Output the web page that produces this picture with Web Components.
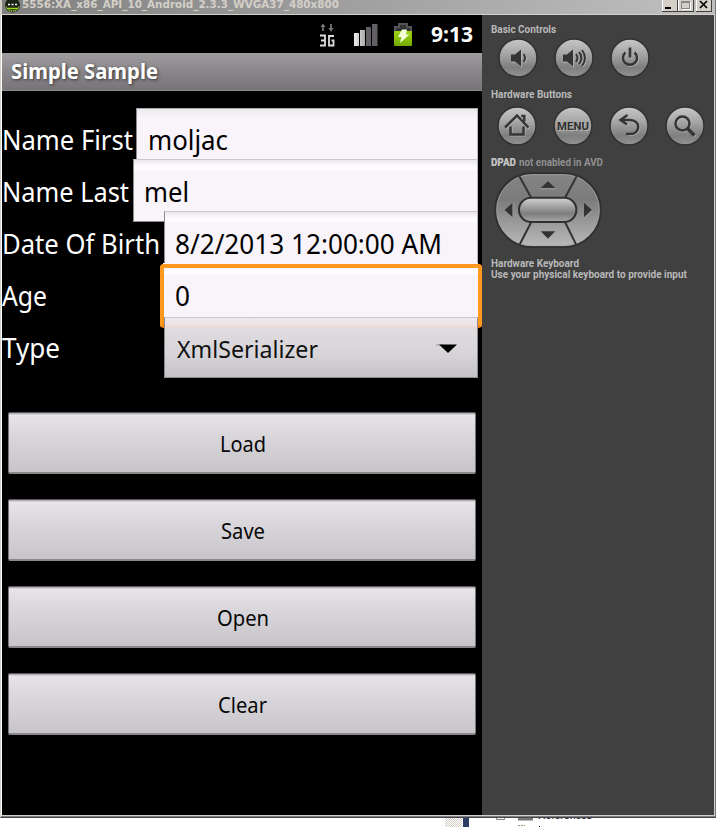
<!DOCTYPE html>
<html lang="en"><head><meta charset="utf-8"><title>Android Emulator</title>
<style>html,body{margin:0;width:716px;height:827px;overflow:hidden;background:#fff}</style></head>
<body><emulator-window></emulator-window>
<script>
const define=(name,html,setup)=>{
  const t=document.createElement('template');t.innerHTML=html;
  customElements.define(name,class extends HTMLElement{
    constructor(){super();this.attachShadow({mode:'open'}).append(t.content.cloneNode(true));}
    connectedCallback(){if(setup)setup(this,this.shadowRoot);}
  });
};
// Text condensed or widened to an exact advance width.
define('fit-text',`<style>:host{display:block;white-space:nowrap;flex:none}span{display:inline-block;transform-origin:0 50%}</style><span><slot></slot></span>`,
 (el,r)=>{const s=r.querySelector('span'),w=+el.getAttribute('w');el.style.width=w+'px';
  s.style.transform='scaleX('+w/s.getBoundingClientRect().width+')';});

define('window-caption',`<style>
:host{display:flex;background:linear-gradient(90deg,#808080,#c0c0c0);border-bottom:1px solid #d4d0c8;box-sizing:border-box;height:15px;overflow:hidden;padding-left:3px;margin-left:1px;
 font:bold 11px/12px "DejaVu Sans",sans-serif;color:#d4d0c8}
svg{flex:none}.t{margin:-1px 0 0 1px}
</style><svg width="16" height="14" viewBox="0 0 16 14"><circle cx="7.500" cy="5" r="7.500" fill="#1c2415"/><path d="M.8 6a7 7 0 0 0 13.400 0" fill="none" stroke="#7d9a45"/><path d="M2 8.500h11" stroke="#9cdc22" stroke-width="1.500"/><path d="M4 11h8" stroke="#b5e04a" stroke-dasharray="1 1"/><path d="M3 4.500h2M6.500 4.500h2M10 4.500h2" stroke="#fff" stroke-width="1.500"/></svg>
<fit-text class="t" w="317">5556:XA_x86_API_10_Android_2.3.3_WVGA37_480x800</fit-text><span style="flex:1"></span>
<svg width="54" height="14" viewBox="0 0 54 14" shape-rendering="crispEdges"><g fill="#d4d0c8"><path d="M1 0h15v12H1zM17 0h15v12H17zM35 0h15v12H35z"/></g><path d="M1 11.500h15V0M17 11.500h15V0M35 11.500h15V0" fill="none" stroke="#404040"/><path d="M1.500 0v11M17.500 0v11M35.500 0v11" stroke="#fff"/><path d="M4 8h6" stroke="#000" stroke-width="2"/><path d="M20.500 2.500h8v6h-8z" fill="none" stroke="#888"/><path d="M20 1.500h9" stroke="#888"/><path d="M29.500 2v7.500H21" stroke="#fff" fill="none"/><path d="M39 1l7 7M46 1l-7 7" stroke="#000" stroke-width="1.700" shape-rendering="auto"/></svg>`);

define('status-bar',`<style>:host{display:flex;height:38px;box-sizing:border-box;background:#000;color:#fff;padding-right:9px;justify-content:flex-end;font:bold 21px/38px "Noto Sans",sans-serif}svg{flex:none;margin-right:13px}</style>
<svg width="102" height="38" viewBox="0 0 102 38"><defs><linearGradient id="g" x2="0" y2="1"><stop offset="0" stop-color="#9ed415"/><stop offset="1" stop-color="#75a900"/></linearGradient><linearGradient id="s"><stop stop-color="#eee"/><stop offset="1" stop-color="#aaa"/></linearGradient></defs>
<path d="M7 16v-5M15 9v5" stroke="#777" stroke-width="1.700"/><path d="M4.500 12L7 8.500 9.500 12zM12.500 13L15 17l2.500-4z" fill="#777"/>
<path d="M4 20.500h5v10H4M5 25.500h4M18 21h-5v9.500h4.500v-5h-2" stroke="#ddd" stroke-width="1.800" fill="none"/>
<path d="M38 18h5v13h-5zM44 15h5v16h-5z" fill="url(#s)"/><path d="M50 12h5v19h-5zM56 9h5.500v22H56z" fill="#626065"/>
<path d="M79 17v-5h4V9h8v3h4v5" fill="#333" stroke="#555" stroke-width="2"/><rect x="78" y="16" width="18" height="15" rx="1" fill="url(#g)"/><path d="M86 14.500h5l-1 5h3.500L84 28l1.500-6H82z" fill="#f2ffd8"/></svg><fit-text w="42">9:13</fit-text>`);

define('app-title',`<style>:host{display:flex;height:38px;box-sizing:border-box;padding-left:9px;background:linear-gradient(#a09da1,#858286 60%,#777578);border-bottom:1px solid #8b898c;color:#fff;font:bold 21px/37px "Noto Sans",sans-serif;text-shadow:1px 1px 3px #333}</style><fit-text w="147"><slot></slot></fit-text>`);

define('form-row',`<style>:host{display:flex;height:52px;color:#fff;font:28px/62px "Noto Sans",sans-serif}
.label{flex:none;overflow:visible}</style><div class="label"></div><slot></slot>`,
 (el,r)=>{const l=r.querySelector('.label');l.style.width=el.getAttribute('col')+'px';
 const f=document.createElement('fit-text');f.setAttribute('w',el.getAttribute('w'));f.innerHTML='<slot name="label"></slot>';l.replaceChildren(f);});

define('text-field',`<style>:host{display:flex;flex:1;box-sizing:border-box;height:62px;margin-right:4px;padding-left:11px;color:#000;border:1px solid #8c8a8e;border-top-color:#aaa8ac;border-right-color:#b8b5ba;
 background:linear-gradient(#ebe8ec,#f8f4fa 9px,#f8f4fa);line-height:61px;position:relative;font-size:28px}
:host([over]){margin-top:-1px;height:63px;line-height:63px;border-top-color:#cbc8cd;background:linear-gradient(#e9e6ea 0,#f8f5f9 4px,#fffcff 7px,#fffcff 10px,#f8f4fa 11px)}
:host([focus])::before{content:"";position:absolute;inset:0 -5px -3px -4px;border:4px solid #ff981f;border-bottom-color:#f5810c;border-radius:4px}
:host([focus]){border-color:transparent}</style><slot></slot>`);

define('drop-down',`<style>:host{display:flex;flex:1;height:61px;box-sizing:border-box;margin:1px 4px 0 0;padding:2px 18px 0 12px;justify-content:space-between;align-items:center;position:relative;color:#111;
 border:1px solid #8e8b90;border-top-color:#c9c6cb;font-size:24px;line-height:60px;background:linear-gradient(#efe9f0,#eee4e6 6px,#ead9d4 9px,#dedcdf 11px,#d7d5d9 35px,#c6c3c8)}</style><slot></slot>
<svg width="24" height="12" viewBox="0 0 24 12"><path d="M1 2h8" stroke="#999"/><path d="M4 1.500h18L13 10z" fill="#000"/></svg>`);

define('push-button',`<style>:host{display:flex;justify-content:center;height:62px;box-sizing:border-box;border:1px solid #77757a;border-top-color:#5d5b60;border-bottom:2px solid #89878b;border-radius:2px;color:#080808;font:22px/60px "Noto Sans",sans-serif;padding-left:1px;
background:linear-gradient(#9d9a9f 0,#e8e4e9 2px,#dad8dc 35%,#c8c5ca)}</style><slot></slot>`);

define('phone-screen',`<style>:host{display:block;width:480px;height:800px;background:#000}.form{padding-top:17px}.buttons{display:grid;gap:25px;padding:44px 6px 0}</style>
<status-bar></status-bar><app-title>Simple Sample</app-title><div class="form">
<form-row col="134" w="131"><span slot="label">Name First</span><text-field><fit-text w="80">moljac</fit-text></text-field></form-row>
<form-row col="131" w="127"><span slot="label">Name Last</span><text-field over style="padding-left:10px"><fit-text w="45">mel</fit-text></text-field></form-row>
<form-row col="162" w="158"><span slot="label">Date Of Birth</span><text-field over style="padding-left:10px"><fit-text w="267">8/2/2013 12:00:00 AM</fit-text></text-field></form-row>
<form-row col="161" w="45"><span slot="label">Age</span><text-field over focus><fit-text w="15">0</fit-text></text-field></form-row>
<form-row col="162" w="58"><span slot="label">Type</span><drop-down><fit-text w="141">XmlSerializer</fit-text></drop-down></form-row></div>
<div class="buttons"><push-button><fit-text w="46">Load</fit-text></push-button><push-button><fit-text w="44">Save</fit-text></push-button><push-button><fit-text w="52">Open</fit-text></push-button><push-button><fit-text w="49">Clear</fit-text></push-button></div>`);

const icons={
 down:'<path d="M14 17.500h4l6-5v17l-6-5h-4z" fill="#353535"/><path d="M26.500 17q3 4 0 8" stroke-width="2"/>',
 up:'<path d="M10 17.500h4l6-5v17l-6-5h-4z" fill="#353535"/><path d="M23 17q3 4 0 8M26 15q5 6 0 12M29 13q6 8 0 16" stroke-width="2"/>',
 power:'<path d="M16.500 15.500a7 7 0 1 0 9 0" stroke-width="2.500"/><path d="M21 10.500v10" stroke-width="2.700"/>',
 home:'<path d="M9 22.500L21 10.500l11.500 12M26.500 12v-1h1.800v5.500M14.500 21.500v8h13v-8" stroke-width="2.500"/>',
 menu:'',
 back:'<path d="M19.500 10l-7 5 6.500 4.500M14 15h8c11 0 11 14 0 14h-4" stroke-width="2.500"/>',
 search:'<circle cx="18.500" cy="18.500" r="7" stroke-width="2.500"/><path d="M23.500 23.500l7 7" stroke-width="3.500"/>'
};
define('control-button',`<style>:host{display:grid;width:42px;height:42px;font:bold 10.5px/42px Roboto,sans-serif;color:#303030}svg,div{grid-area:1/1}div{display:flex;justify-content:center;padding-top:1px;text-shadow:1px 1px 0 #bbb}</style><svg width="42" height="42" viewBox="0 0 42 42"></svg><div><slot></slot></div>`,
 (el,r)=>{r.querySelector('svg').innerHTML='<defs><linearGradient id="c" x2="0" y2="1"><stop stop-color="#c5c6c7"/><stop offset=".35" stop-color="#aaa"/><stop offset=".75" stop-color="#7f7f7f"/><stop offset="1" stop-color="#929292"/></linearGradient></defs><circle cx="21" cy="21" r="19" fill="url(#c)" stroke="#303030" stroke-width="1.500"/><g fill="none" stroke="#c4c4c4" opacity=".65" transform="translate(.8 .8)">'+icons[el.getAttribute('icon')].replace(/fill="[^"]*"/g,'')+'</g><g fill="none" stroke="#353535">'+icons[el.getAttribute('icon')].replace('fill="#353535"','fill="#353535" stroke="none"')+'</g>';});

define('direction-pad',`<style>:host{display:block;height:80px;width:115px}svg{display:block}</style><svg width="115" height="80" viewBox="21 60 345 240"><defs><linearGradient id="p" x2="0" y2="1"><stop stop-color="#858585"/><stop offset=".35" stop-color="#7b7b7b"/><stop offset="1" stop-color="#b9baba"/></linearGradient><linearGradient id="o" x2="0" y2="1"><stop stop-color="#d1d2d2"/><stop offset=".65" stop-color="#7d7d7d"/><stop offset="1" stop-color="#a8a8a8"/></linearGradient></defs>
<rect x="34" y="70" width="316" height="221" rx="110" fill="url(#p)" stroke="#303030" stroke-width="6"/><rect x="38" y="74" width="308" height="213" rx="106" fill="none" stroke="#aaa" stroke-width="2"/>
<path d="M104 75L145 149M280 75L240 149M240 210L278 287M145 210L105 287" stroke="#333" stroke-width="6"/>
<rect x="105" y="143" width="172" height="73" rx="36" fill="url(#o)" stroke="#303030" stroke-width="6"/>
<path d="M170 114L192 94l22 20zM170 244h44l-22 22zM86 158v44l-24-22zM300 158v44l24-22z" fill="#333"/><path d="M169 116h46M215 245l-22 22M87 158v45M324 181l-24 23" stroke="#aaa" stroke-width="2"/></svg>`);

define('control-panel',`<style>:host{display:block;flex:1;box-sizing:border-box;padding:9px 0 0 9px;background:#404040;color:#b9b9b9;font:bold 10px/12px Roboto,sans-serif}.r{display:flex;gap:14px;padding-left:5px}.a{margin:1px 0 10px;padding-left:5.5px}.b{margin:4px 0 10px;padding-left:4.5px}.d{display:flex;gap:3px;color:#909090;height:13px}.k{line-height:11px;margin-top:8px}strong{color:#c6c6c6}</style>
<fit-text w="65">Basic Controls</fit-text><div class="r a"><control-button icon="down"></control-button><control-button icon="up"></control-button><control-button icon="power"></control-button></div>
<fit-text w="81">Hardware Buttons</fit-text><div class="r b"><control-button icon="home"></control-button><control-button icon="menu"><fit-text w="32">MENU</fit-text></control-button><control-button icon="back"></control-button><control-button icon="search"></control-button></div>
<div class="d"><fit-text w="25"><strong>DPAD</strong></fit-text><fit-text w="84">not enabled in AVD</fit-text></div><direction-pad></direction-pad>
<div class="k"><fit-text w="88">Hardware Keyboard</fit-text><fit-text w="196">Use your physical keyboard to provide input</fit-text></div>`);

define('desktop-strip',`<style>:host{display:flex;height:9px;overflow:hidden;background:#fff;padding-left:445px;font:11px/13px "Liberation Sans",sans-serif;color:#000}.h{width:17px;background:repeating-conic-gradient(#d4d0c8 0 25%,#fff 0 50%) 0 0/2px 2px}.n{width:6px;margin-left:1px;background:#2b3d63}svg{margin-left:27px}.t{margin:-9px 0 0 -4px}</style><div class="h"></div><div class="n"></div><svg width="46" height="9" viewBox="0 0 46 9"><path d="M.5 0v1.500h8V0" fill="none" stroke="#808080"/><path d="M22 0h15v2.500H22z" fill="#777"/><path d="M22 7.500h7" stroke="#a59c76" stroke-dasharray="2 1"/><path d="M43 8h1v1h-1z"/></svg><fit-text class="t" w="54">References</fit-text>`);

define('emulator-window',`<style>:host{display:block;width:716px;height:827px;overflow:hidden;background:#fff}.w{height:818px;box-sizing:border-box;border-left:1px solid #d4d0c8;border-right:1px solid #77757a;border-bottom:1px solid #45434c;background:#d4d0c8}.m{display:flex;height:800px;border-left:1px solid #fff;border-right:1px solid #d4d0c8;border-bottom:1px solid #d4d0c8}.e{height:1px;background:#808080}</style><div class="w"><window-caption></window-caption><div class="m"><phone-screen></phone-screen><control-panel></control-panel></div><div class="e"></div></div><desktop-strip></desktop-strip>`);
</script></body></html>
